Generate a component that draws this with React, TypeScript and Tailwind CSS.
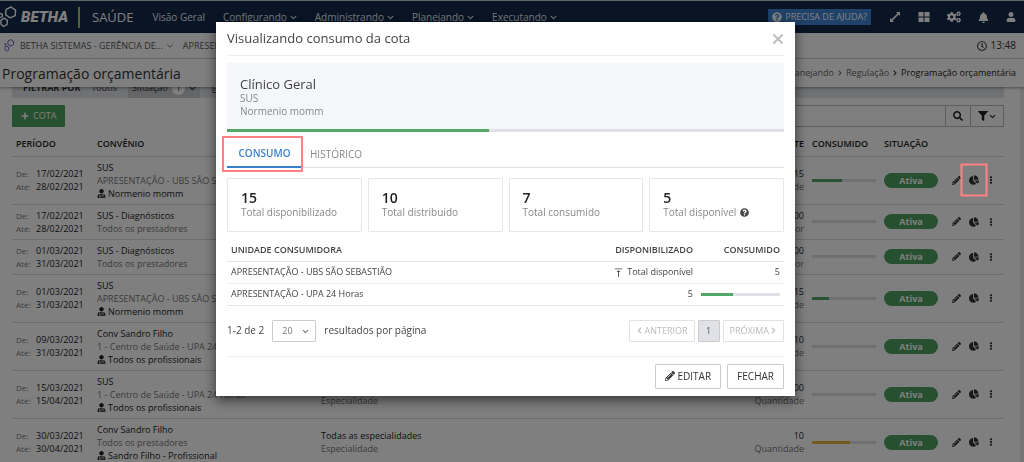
import { useState } from "react";
import {
  FaBell,
  FaChartPie,
  FaChevronDown,
  FaChevronLeft,
  FaChevronRight,
  FaCogs,
  FaEllipsisV,
  FaFilter,
  FaPencilAlt,
  FaPlus,
  FaQuestionCircle,
  FaRegCalendarAlt,
  FaRegClock,
  FaSearch,
  FaUser,
  FaUserMd,
} from "react-icons/fa";
import { FiChevronDown } from "react-icons/fi";
import { MdVerticalAlignTop } from "react-icons/md";

type Quota = {
  from: string;
  to: string;
  plan: string;
  provider: string;
  professional?: string;
  amount: string;
  unit: string;
  used: number;
  bar?: string;
  highlighted?: boolean;
};

const quotas: Quota[] = [
  { from: "17/02/2021", to: "28/02/2021", plan: "SUS", provider: "APRESENTAÇÃO - UBS SÃO SEBASTIÃO", professional: "Normenio momm", amount: "15", unit: "Quantidade", used: 47, highlighted: true },
  { from: "17/02/2021", to: "28/02/2021", plan: "SUS - Diagnósticos", provider: "Todos os prestadores", amount: "100,00", unit: "Valor", used: 0 },
  { from: "01/03/2021", to: "31/03/2021", plan: "SUS - Diagnósticos", provider: "Todos os prestadores", amount: "100,00", unit: "Valor", used: 0 },
  { from: "01/03/2021", to: "31/03/2021", plan: "SUS", provider: "APRESENTAÇÃO - UBS SÃO SEBASTIÃO", professional: "Normenio momm", amount: "15", unit: "Quantidade", used: 27 },
  { from: "09/03/2021", to: "31/03/2021", plan: "Conv Sandro Filho", provider: "1 - Centro de Saúde - UPA 24 Horas", professional: "Todos os profissionais", amount: "10", unit: "Quantidade", used: 0 },
  { from: "15/03/2021", to: "15/04/2021", plan: "SUS", provider: "1 - Centro de Saúde - UPA 24 Horas", professional: "Todos os profissionais", amount: "100", unit: "Quantidade", used: 0 },
  { from: "30/03/2021", to: "30/04/2021", plan: "Conv Sandro Filho", provider: "Todos os prestadores", professional: "Sandro Filho - Profissional", amount: "10", unit: "Quantidade", used: 60, bar: "bg-[#e9b43a]" },
];

const totals = [
  { value: 15, label: "Total disponibilizado" },
  { value: 10, label: "Total distribuido" },
  { value: 7, label: "Total consumido" },
  { value: 5, label: "Total disponível", help: true },
];

const menus = ["Configurando", "Administrando", "Planejando", "Executando"];

function ProgressBar({ value, color = "bg-[#52a766]" }: { value: number; color?: string }) {
  return (
    <div className="h-[3px] w-full bg-[#dfe1e6]">
      <div className={`h-full ${color}`} style={{ width: `${value}%` }} />
    </div>
  );
}

function Hexagons({ className }: { className: string }) {
  return (
    <svg viewBox="0 0 17 22" fill="none" stroke="currentColor" strokeWidth="1.4" strokeLinejoin="round" className={className}>
      <path d="M10.900 1 L15.600 4.200 L15.200 9.600 L10.100 11.900 L5.600 8.700 L6.100 3.300 Z" />
      <path d="M4.200 12.200 L7.400 14.300 L7.100 18.400 L3.500 20.500 L.8 18.100 L1 14.100 Z" />
      <path d="M0 7.400 L2.400 8.200 L2.300 10.700 L0 11.700" />
    </svg>
  );
}

function Navbar() {
  return (
    <header className="flex h-[33px] items-center border-t border-[#c5ccd2] bg-[#12294a] pr-2 text-white">
      <a href="#" className="flex items-center" aria-label="Betha Saúde">
        <Hexagons className="h-[22px] w-[17px]" />
        <span className="ml-1 w-[57px] font-['Roboto'] text-[15px] font-black italic leading-5">BETHA</span>
        <span className="mr-3 h-[21px] w-[2px] bg-[#a5cf6e]" />
        <span className="text-[13px] leading-5">SAÚDE</span>
      </a>
      <nav className="ml-[19px] flex items-center gap-[18px] text-[10px] text-[#e8edf3]">
        <a href="#">Visão Geral</a>
        {menus.map((m) => (
          <button key={m} className="flex items-center gap-[3px]">
            {m}
            <FaChevronDown size={7} />
          </button>
        ))}
      </nav>
      <div className="ml-auto flex items-center text-[12px]">
        <button className="mr-[18px] flex h-4 items-center gap-[3px] bg-[#3d84d2] px-1 text-[9px]">
          <FaQuestionCircle size={10} />
          PRECISA DE AJUDA?
        </button>
        <div className="flex items-center gap-[17px]">
          <button aria-label="Tela cheia">
            <svg viewBox="0 0 12 12" className="size-3" fill="currentColor">
              <path d="M7 1h4v4L9.600 3.600 3.600 9.600 5 11H1V7l1.400 1.400 6-6z" />
            </svg>
          </button>
          <button aria-label="Aplicativos">
            <svg viewBox="0 0 12 12" className="size-3" fill="currentColor">
              <path d="M.5 1h5v4.500h-5zM6.500 1h5v4.500h-5zM.5 6.500h5V11h-5zM6.500 6.500h5V11h-5z" />
            </svg>
          </button>
          <button aria-label="Configurações"><FaCogs size={14} /></button>
          <button aria-label="Notificações"><FaBell size={11} /></button>
          <button aria-label="Usuário"><FaUser size={10} /></button>
        </div>
      </div>
    </header>
  );
}

function PageHeader() {
  return (
    <>
      <div className="flex h-[26px] items-center border-b border-[#dcdcdc] bg-white pl-1 pr-2 text-[9px] text-[#555]">
        <Hexagons className="h-[13px] w-[11px] text-[#3f3fa0]" />
        <button className="ml-[5px] flex items-center gap-[2px]">
          BETHA SISTEMAS - GERÊNCIA DE...
          <FiChevronDown size={10} />
        </button>
        <button className="ml-2">APRESENTAÇÃO</button>
        <span className="ml-auto flex items-center gap-1 text-[10px] text-[#333]">
          <FaRegClock size={10} />
          13:48
        </span>
      </div>
      <div className="relative flex h-7 items-center justify-between bg-white pl-[2px] pr-2 shadow-[0_1px_3px_rgba(0,0,0,0.4)]">
        <h1 className="text-[14px] text-[#333]">Programação orçamentária</h1>
        <ol className="flex items-center gap-[3px] text-[9px] text-[#666]">
          <li><a href="#">Planejando</a></li>
          <li className="flex items-center gap-[3px]">
            <FaChevronRight size={6} />
            <a href="#">Regulação</a>
          </li>
          <li className="flex items-center gap-[3px] text-[#222]">
            <FaChevronRight size={6} />
            <span>Programação orçamentária</span>
          </li>
        </ol>
      </div>
    </>
  );
}

function QuotaRow({ quota }: { quota: Quota }) {
  return (
    <tr className="border-b border-[#d9d9d9] text-[9px] leading-[13px] text-[#222]">
      <td className="pl-1">
        <div className="grid grid-cols-[20px_1fr] items-center">
          <span className="text-[8px] text-[#777]">De:</span>
          <span>{quota.from}</span>
          <span className="text-[8px] text-[#777]">Até:</span>
          <span>{quota.to}</span>
        </div>
      </td>
      <td className="whitespace-nowrap py-1">
        <p>{quota.plan}</p>
        <p className="text-[#777]">{quota.provider}</p>
        {quota.professional && (
          <p className="flex items-center gap-[2px]">
            <FaUserMd size={9} />
            {quota.professional}
          </p>
        )}
      </td>
      <td>
        <p>Todas as especialidades</p>
        <p className="text-[#777]">Especialidade</p>
      </td>
      <td className="text-right">
        <p>{quota.amount}</p>
        <p className="text-[#777]">{quota.unit}</p>
      </td>
      <td className="pl-2">
        <ProgressBar value={quota.used} color={quota.bar} />
      </td>
      <td className="pl-2">
        <span className="block rounded-full bg-[#4ea062] text-center text-[9px] font-bold leading-[15px] text-white">
          Ativa
        </span>
      </td>
      <td className="pl-[14px] text-[#333]">
        <div className="flex items-center gap-2">
          <button aria-label="Editar"><FaPencilAlt size={9} /></button>
          <button aria-label="Ver consumo" className="relative">
            <FaChartPie size={10} />
            {quota.highlighted && (
              <span className="absolute left-1/2 top-1/2 z-50 h-[33px] w-[27px] -translate-x-1/2 -translate-y-1/2 border-2 border-[#ff8383]" />
            )}
          </button>
          <button aria-label="Mais opções"><FaEllipsisV size={8} /></button>
        </div>
      </td>
    </tr>
  );
}

function QuotaList() {
  return (
    <main className="flex-1 overflow-hidden bg-[#e9ebee] pr-1">
      <div className="h-full bg-white pl-3 pr-4">
        <div className="flex h-[11px] items-end overflow-hidden bg-[#e1e3e8] pl-[11px] text-[9px] text-[#333]">
          <div className="flex h-5 items-center">
            <b>FILTRAR POR</b>
            <span className="mx-[11px]">Todos</span>
            <span className="flex h-5 items-center gap-1 bg-[#c8cacd] px-1">
              Situação
              <span className="rounded-full bg-white px-1">1</span>
              <FaChevronDown size={7} />
            </span>
            <FaRegCalendarAlt size={9} className="ml-3" />
          </div>
        </div>

        <div className="mt-[7px] flex h-[22px] items-stretch text-[10px]">
          <button className="flex items-center gap-1 rounded-[1px] bg-[#4ea062] px-[9px] text-[9px] text-white">
            <FaPlus size={8} />
            COTA
          </button>
          <input aria-label="Pesquisar" className="ml-auto w-1/2 border border-[#bbb] px-2" />
          <button aria-label="Buscar" className="-ml-px flex w-[26px] items-center justify-center border border-[#bbb] text-[#222]">
            <FaSearch size={10} />
          </button>
          <button aria-label="Filtros" className="-ml-px flex w-[34px] items-center justify-center border border-[#bbb] text-[#222]">
            <FaFilter size={10} />
            <FiChevronDown size={9} strokeWidth={3} />
          </button>
        </div>

        <table className="mt-1 w-full table-fixed text-left">
          <colgroup>
            <col className="w-[85px]" />
            <col className="w-[224px]" />
            <col />
            <col className="w-[100px]" />
            <col className="w-[72px]" />
            <col className="w-[62px]" />
            <col className="w-[66px]" />
          </colgroup>
          <thead>
            <tr className="h-[25px] border-b border-[#d9d9d9] text-[9px] text-[#222]">
              <th className="pl-1 font-semibold">PERÍODO</th>
              <th className="font-semibold">CONVÊNIO</th>
              <th className="font-semibold">ESPECIALIDADE</th>
              <th className="text-right font-semibold">LIMITE</th>
              <th className="pl-2 font-semibold">CONSUMIDO</th>
              <th className="pl-2 font-semibold">SITUAÇÃO</th>
              <th aria-label="Ações" />
            </tr>
          </thead>
          <tbody>
            {quotas.map((q, i) => (
              <QuotaRow key={i} quota={q} />
            ))}
          </tbody>
        </table>
      </div>
    </main>
  );
}

function QuotaModal({ onClose }: { onClose: () => void }) {
  return (
    <div className="fixed inset-0 z-40 flex items-start justify-center bg-black/50 pr-[13px] pt-[22px]">
      <section
        role="dialog"
        aria-labelledby="modal-title"
        className="w-full max-w-[579px] bg-white px-[11px] text-[10px] text-[#444] shadow-[0_4px_12px_rgba(0,0,0,0.6)]"
      >
        <header className="flex h-[34px] items-center justify-between border-b border-[#eee]">
          <h2 id="modal-title" className="text-[13px] text-[#444]">Visualizando consumo da cota</h2>
          <button aria-label="Fechar janela" onClick={onClose} className="text-[#bbb]">
            <svg viewBox="0 0 12 12" className="size-3" stroke="currentColor" strokeWidth="1.800">
              <path d="M1.500 1.500l9 9M10.500 1.500l-9 9" />
            </svg>
          </button>
        </header>

        <div className="mt-[7px] bg-[#f4f6fa]">
          <div className="h-[66px] px-[13px] pt-[13px] text-[#888]">
            <h3 className="text-[13px] leading-4 text-[#444]">Clínico Geral</h3>
            <p className="leading-[13px]">SUS</p>
            <p className="leading-[13px]">Normenio momm</p>
          </div>
          <ProgressBar value={47} />
        </div>

        <div role="tablist" className="mt-[5px] flex h-[31px] border-b border-[#dcdfe6]">
          <button role="tab" aria-selected="true" className="relative -mb-px w-[75px] border-b-2 border-[#3a7fcb] pt-1 font-semibold text-[#3a7fcb]">
            CONSUMO
            <span className="absolute -left-[5px] -right-px -top-px -bottom-[6px] border-2 border-[#ff8383]" />
          </button>
          <button role="tab" aria-selected="false" className="px-2 pt-1 text-[#888]">HISTÓRICO</button>
        </div>

        <div className="mt-[10px] grid grid-cols-4 gap-[6px]">
          {totals.map((t) => (
            <div key={t.label} className="h-[54px] rounded-[1px] border border-[#e6e6e6] px-[13px] pt-[11px]">
              <p className="text-[14px] font-semibold leading-4 text-[#222]">{t.value}</p>
              <p className="flex items-center gap-1 leading-3 text-[#888]">
                {t.label}
                {t.help && <FaQuestionCircle size={9} className="text-[#444]" />}
              </p>
            </div>
          ))}
        </div>

        <table className="mt-[6px] w-full table-fixed text-[9px]">
          <colgroup>
            <col />
            <col className="w-[120px]" />
            <col className="w-[91px]" />
          </colgroup>
          <thead>
            <tr className="h-[23px] border-b border-[#e6e6e6]">
              <th className="pl-1 text-left font-semibold">UNIDADE CONSUMIDORA</th>
              <th className="text-right font-semibold">DISPONIBILIZADO</th>
              <th className="pl-2 pr-1 text-right font-semibold">CONSUMIDO</th>
            </tr>
          </thead>
          <tbody>
            <tr className="h-[22px] border-b border-[#eee]">
              <td className="pl-1">APRESENTAÇÃO - UBS SÃO SEBASTIÃO</td>
              <td>
                <span className="flex items-center justify-end gap-[3px]">
                  <MdVerticalAlignTop size={11} />
                  Total disponível
                </span>
              </td>
              <td className="pr-1 text-right">5</td>
            </tr>
            <tr className="h-[22px] border-b border-[#e6e6e6]">
              <td className="pl-1">APRESENTAÇÃO - UPA 24 Horas</td>
              <td className="text-right">5</td>
              <td className="pl-2 pr-1"><ProgressBar value={40} /></td>
            </tr>
          </tbody>
        </table>

        <div className="mt-[14px] flex h-[22px] items-center">
          <span>1-2 de 2</span>
          <span className="relative mx-2">
            <select
              aria-label="Resultados por página"
              defaultValue="20"
              className="h-[22px] w-11 appearance-none rounded-[1px] border border-[#ccc] bg-white pl-[9px] text-[9px] text-[#777]"
            >
              <option>20</option>
              <option>50</option>
            </select>
            <FiChevronDown size={9} strokeWidth={3} className="pointer-events-none absolute right-[6px] top-[7px] text-[#777]" />
          </span>
          <span>resultados por página</span>
          <div className="ml-auto flex gap-[3px] text-[9px] text-[#bbb]">
            <button disabled className="flex h-[22px] items-center gap-px rounded-[1px] border border-[#e2e2e2] px-[6px]">
              <FaChevronLeft size={7} />
              ANTERIOR
            </button>
            <button className="h-[22px] w-[22px] rounded-[1px] border border-[#ccc] bg-[#e0e2e7] text-[#555]">1</button>
            <button disabled className="flex h-[22px] items-center gap-px rounded-[1px] border border-[#e2e2e2] px-[6px]">
              PRÓXIMA
              <FaChevronRight size={7} />
            </button>
          </div>
        </div>

        <footer className="mt-[14px] flex justify-end gap-[6px] border-t border-[#f0f0f0] py-[7px] text-[#333]">
          <button className="flex h-[25px] items-center gap-[3px] rounded-[1px] border border-[#ccc] px-[9px]">
            <FaPencilAlt size={10} />
            EDITAR
          </button>
          <button onClick={onClose} className="h-[25px] rounded-[1px] border border-[#ccc] px-[9px]">FECHAR</button>
        </footer>
      </section>
    </div>
  );
}

export default function App() {
  const [open, setOpen] = useState(true);

  return (
    <div className="flex h-screen flex-col overflow-hidden font-['Open_Sans',sans-serif]">
      <Navbar />
      <PageHeader />
      <QuotaList />
      {open && <QuotaModal onClose={() => setOpen(false)} />}
    </div>
  );
}
